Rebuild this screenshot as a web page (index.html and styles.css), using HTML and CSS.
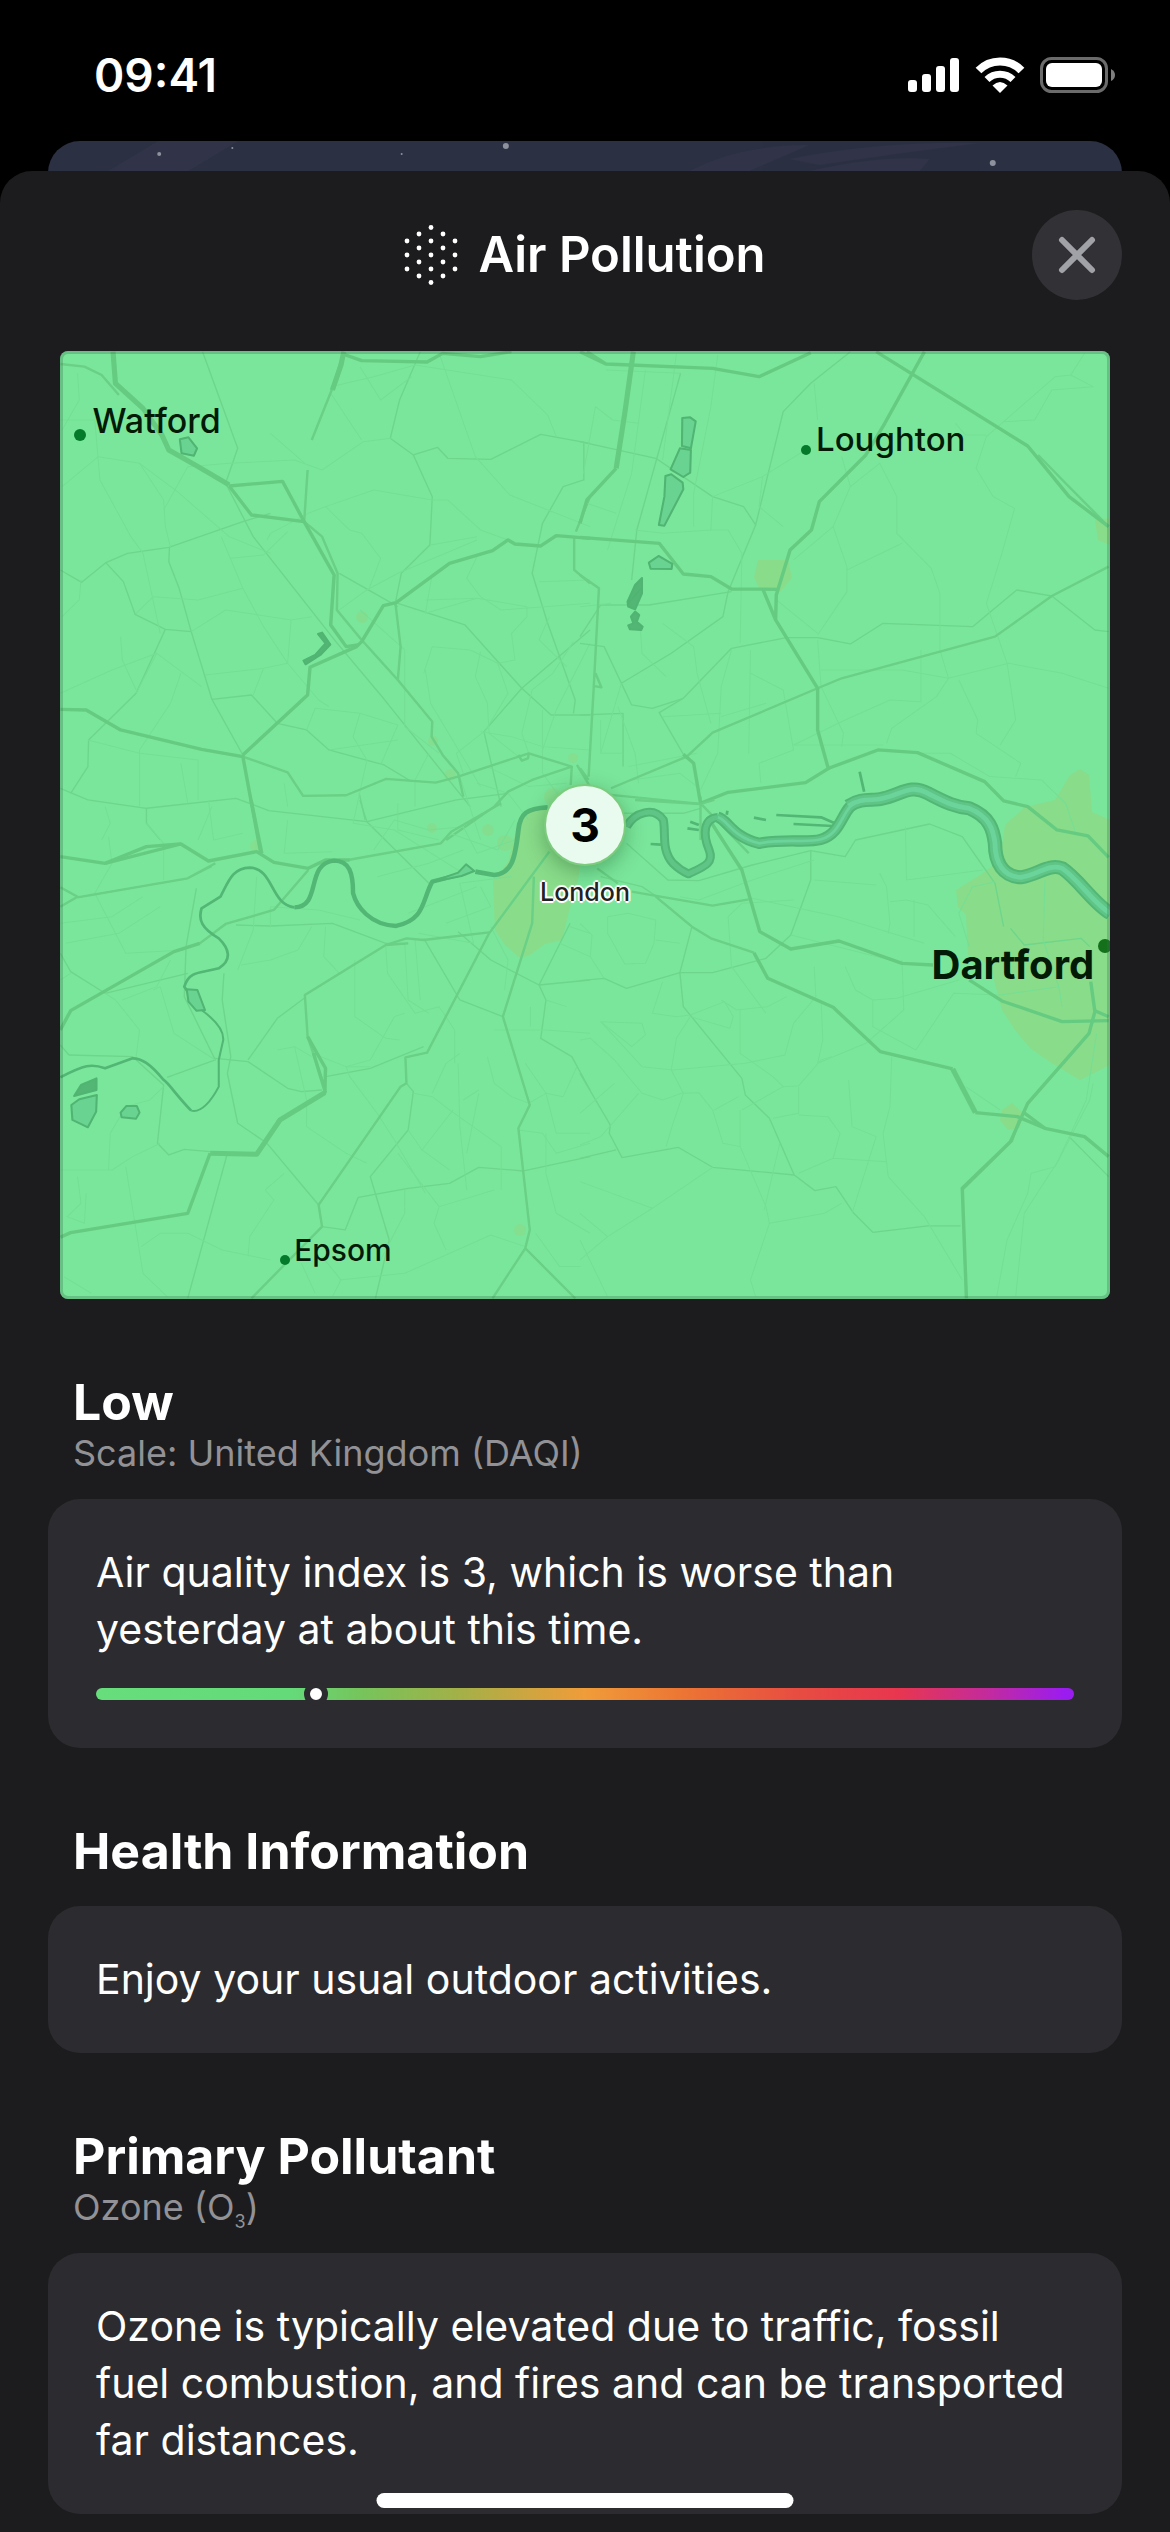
FILE: index.html
```html
<!DOCTYPE html>
<html lang="en">

<head>
    <meta charset="UTF-8">
    <meta name="viewport" content="width=device-width, initial-scale=1.0">
    <title>Air Pollution</title>
    <link rel="stylesheet" href="styles.css">
</head>

<body>
    <div class="status-bar">
        <span class="time">09:41</span>
        <div class="status-icons">
            <svg width="52" height="36" viewBox="0 0 52 36" fill="#fff">
                <rect x="0" y="23" width="9" height="12" rx="3" />
                <rect x="14" y="17" width="9" height="18" rx="3" />
                <rect x="28" y="9" width="9" height="26" rx="3" />
                <rect x="42" y="1" width="9" height="34" rx="3" />
            </svg>
            <svg width="50" height="36" viewBox="0 0 50 36" fill="none" stroke="#fff" stroke-width="8">
                <path d="M3.500 13.500 A30 30 0 0 1 46.500 13.500" />
                <path d="M12 22.500 A18.500 18.500 0 0 1 38 22.500" stroke-width="7" />
                <path d="M25 36 L17.500 28.500 Q25 21.500 32.500 28.500Z" fill="#fff" stroke="none" />
            </svg>
            <svg width="76" height="36" viewBox="0 0 76 36">
                <rect x="1.500" y="1.500" width="65" height="33" rx="10" fill="none" stroke="#6b6b6b" stroke-width="3" />
                <rect x="6" y="6" width="56" height="24" rx="6" fill="#fff" />
                <path d="M71 12 Q75 14 75 18 Q75 22 71 24Z" fill="#7f7f7f" />
            </svg>
        </div>
    </div>

    <div class="back-card">
        <svg width="100%" height="30" viewBox="0 0 1072 30" preserveAspectRatio="none">
            <g fill="#3f3f58" opacity="0.3">
                <path d="M60 30 L110 0 L190 0 L140 30Z" />
                <path d="M640 30 Q690 4 760 4 L700 30Z" />
                <path d="M740 18 Q830 0 930 2 Q850 12 770 24Z" />
                <path d="M760 30 Q830 14 880 18 L870 30Z" />
            </g>
            <g fill="#8d929c">
                <circle cx="111" cy="13" r="2" />
                <circle cx="184" cy="7" r="1" />
                <circle cx="353" cy="13" r="1" />
                <circle cx="457" cy="5" r="3" />
                <circle cx="943" cy="22" r="3" />
            </g>
        </svg>
    </div>

    <main class="sheet">
        <header class="sheet-header">
            <div class="title">
                <svg width="54" height="64" viewBox="0 0 54 64" fill="#fff">
                    <circle cx="27" cy="4.500" r="2.400" />
                    <circle cx="27" cy="18" r="2.400" />
                    <circle cx="27" cy="32" r="2.400" />
                    <circle cx="27" cy="46" r="2.400" />
                    <circle cx="27" cy="59.500" r="2.400" />
                    <circle cx="15" cy="11" r="2.400" />
                    <circle cx="15" cy="25" r="2.400" />
                    <circle cx="15" cy="39" r="2.400" />
                    <circle cx="15" cy="53" r="2.400" />
                    <circle cx="39" cy="11" r="2.400" />
                    <circle cx="39" cy="25" r="2.400" />
                    <circle cx="39" cy="39" r="2.400" />
                    <circle cx="39" cy="53" r="2.400" />
                    <circle cx="3" cy="18" r="2.400" />
                    <circle cx="3" cy="32" r="2.400" />
                    <circle cx="3" cy="46" r="2.400" />
                    <circle cx="51" cy="18" r="2.400" />
                    <circle cx="51" cy="32" r="2.400" />
                    <circle cx="51" cy="46" r="2.400" />
                </svg>
                <h1>Air Pollution</h1>
            </div>
            <button class="close" aria-label="Close">
                <svg width="40" height="40" viewBox="0 0 40 40" stroke="#a1a1a8" stroke-width="6" stroke-linecap="round">
                    <path d="M5 5 L35 35 M35 5 L5 35" />
                </svg>
            </button>
        </header>

        <div class="map">
            <svg class="map-art" viewBox="60 351 1050 948" fill="none" stroke-linejoin="round">
                <rect x="60" y="351" width="1050" height="948" fill="#7ae69b" />

                <!-- pollution patches -->
                <g class="patch">
                    <path d="M1110 965 L1110 820 L1092 812 L1089 775 L1080 769 L1070 775 L1055 800 L1025 807 L1005 825 L1000 860 L980 875 L956 890 L958 907 L966 915 L968 955 L990 965 L1002 1010 L1015 1030 L1030 1048 L1050 1062 L1080 1080 L1090 1075 L1110 1065Z" />
                    <path d="M493 880 L508 862 L518 822 L530 808 L560 808 L585 830 L578 880 L568 915 L562 940 L545 944 L530 955 L520 958 L505 945 L495 930Z" />
                    <path d="M758 560 L788 560 L792 578 L780 592 L760 590 L754 577Z" />
                    <path d="M1095 520 L1110 518 L1110 545 L1098 540Z" />
                    <path d="M1002 1110 L1012 1103 L1022 1112 L1020 1128 L1008 1130 L1000 1120Z" />
                </g>
                <g class="patch hot">
                    <circle cx="362" cy="617" r="6" />
                    <circle cx="433" cy="741" r="5" />
                    <circle cx="450" cy="775" r="6" />
                    <circle cx="573" cy="758" r="5" />
                    <circle cx="256" cy="846" r="6" />
                    <circle cx="432" cy="828" r="5" />
                    <circle cx="488" cy="830" r="6" />
                    <circle cx="505" cy="843" r="8" />
                    <circle cx="553" cy="797" r="9" />
                    <circle cx="520" cy="1230" r="6" />
                </g>

                <!-- north west -->
                <g transform="translate(50 340) scale(0.3444 0.3333)">
                    <g class="lane">
                        <path d="M443 35 L545 325 L510 430 L590 590 L830 905 L960 1065 L1220 1400" />
                        <path d="M30 690 L92 727 L162 668 L225 640 L345 622 L560 545 L640 520" />
                        <path d="M162 668 L213 725 L247 823 L335 868 L410 875 L470 1078 L585 1065 L660 1150 L745 1170 L810 1230 L970 1275 L1050 1325" />
                        <path d="M335 868 L250 1060 L112 1200 L110 1280 L60 1360" />
                        <path d="M347 622 L345 665 L375 745 L410 875" />
                        <path d="M1075 35 L1015 180 L988 295 L1055 345 L1110 470 L1103 615 L1020 700 L1003 788" />
                        <path d="M1055 345 L1125 322 L1155 355 L1280 358 L1425 283 L1568 310" />
                        <path d="M1550 310 L1550 420 L1490 440 L1430 550 L1400 700 L1445 850 L1525 1080 L1520 1120" />
                        <path d="M1003 788 L1205 855 L1370 1045 L1455 1125 L1568 1125" />
                        <path d="M1568 870 L1370 1045 L1260 1175 L1310 1400" />
                        <path d="M840 700 L1010 800" />
                        <path d="M30 1345 L110 1380 L280 1405 L540 1375 L635 1412 L920 1445 L1180 1380 L1330 1360" />
                        <path d="M280 1405 L280 1450 L320 1500 M898 1360 L915 1440" />
                        <path d="M470 1078 L560 1245" />
                    </g>
                    <g class="path">
                        <path d="M80 100 L85 180 L35 270 M30 240 L130 240 L145 420 L235 590 L270 640 L320 880" />
                        <path d="M35 440 L140 350 L260 370 L370 455 L520 590 L640 640" />
                        <path d="M260 370 L330 480 L335 560 L350 622" />
                        <path d="M330 510 L400 380 L520 370 L710 360 L790 390 L910 305 L990 295" />
                        <path d="M640 280 L740 370 M900 80 L960 180 L1050 110" />
                        <path d="M815 140 L940 110 L1060 75 M815 160 L905 300 M1130 40 L1235 350 L1335 465 L1568 560" />
                        <path d="M1060 75 L1340 120 L1445 225 L1470 290" />
                        <path d="M750 520 L800 500 L940 450 L1110 480 L1155 480 L1250 570 L1330 600" />
                        <path d="M800 500 L870 570 L905 580 L960 655 L925 750 M750 520 L640 580 L630 600" />
                        <path d="M497 590 L560 745 L620 860 L690 970 L780 1080 L810 1100" />
                        <path d="M525 655 L620 645 L690 575 M560 745 L430 780 L300 770 L250 820" />
                        <path d="M410 875 L510 810 L700 840 L760 830 M700 840 L690 970 L620 985 L450 1005" />
                        <path d="M620 985 L590 1065 M310 940 L250 1060 M205 890 L210 960 L250 1050 M30 1060 L180 990 L310 940 L440 1040" />
                        <path d="M90 720 L85 780 L35 830 M380 1000 L350 1090 L260 1230 L260 1400" />
                        <path d="M110 1200 L260 1240 L430 1260 L430 1380 M380 1270 L400 1390 M470 1400 L430 1500 M160 1400 L175 1450 L150 1500" />
                        <path d="M745 1170 L770 1105 L900 1120 L1010 1155 L960 1275 M900 1120 L880 1190 L920 1260 L880 1450" />
                        <path d="M840 810 L920 750 L1010 700 L1240 600 M1105 615 L1240 590 M900 810 L1030 930 L1030 1160 L1130 1240 M1090 990 L1105 1090 L1250 1340" />
                        <path d="M1110 700 L1090 820 L1240 775 L1385 800 L1385 830 L1340 880 L1350 960 L1300 970" />
                        <path d="M1240 650 L1210 715 L1250 770 L1310 810 L1568 790 M1090 780 L1240 775 M1420 725 L1568 720 M1450 830 L1420 900 L1500 980" />
                        <path d="M1110 920 L1220 930 L1300 970 L1330 1060 L1260 1180 M1110 920 L1085 1000 M1250 935 L1235 1010 L1270 1090 L1275 1180 L1360 1250" />
                        <path d="M1430 1230 L1470 1110 L1568 910 M1520 905 L1460 1000 L1400 1050 L1370 1180 L1390 1240 M1430 1110 L1430 1300 L1500 1400" />
                        <path d="M1260 1175 L1180 1240 L1200 1300 M1250 1175 L1340 1190 L1430 1220 L1568 1230 M1270 1280 L1390 1340 L1500 1330 M1240 1330 L1330 1360 L1390 1440" />
                        <path d="M1190 1310 L1250 1500 M1010 1390 L1010 1470 L1130 1500 M1100 1240 L1060 1320 L1060 1400 M680 1330 L690 1400 M810 1230 L1010 1200" />
                    </g>
                    <g class="street">
                        <path d="M853 35 L818 150 L760 300 M748 390 L738 545 M1568 470 L1527 575" />
                        <path d="M738 545 L790 590 L835 700 L833 810 L905 900 L1010 1020 L1110 1145 L1108 1190 L1140 1245 L1185 1300 L1200 1370" />
                        <path d="M560 1250 L690 1297 L735 1368 L860 1366 L975 1317 L1120 1328 L1185 1310 L1390 1240 L1515 1280 L1400 1320 L1330 1355 L1290 1400 L1150 1500" />
                        <path d="M1003 790 L1018 920 L1010 1020 M1360 1245 L1370 1262 L1388 1255 L1390 1240 M1515 1280 L1512 1335 M1530 1275 L1568 1340" />
                        <path d="M30 72 L100 80 L150 105 L200 165 M1522 590 L1522 690 L1568 730" />
                    </g>
                    <g class="road">
                        <path class="wide" d="M183 35 L190 130 L270 205 L325 285 L345 330 L430 380 L520 435" />
                        <path d="M520 438 L675 424 L738 545 M520 438 L585 525 L738 545" />
                        <path d="M738 545 L825 705 L815 855 L860 920 L895 915" />
                        <path class="wide" d="M853 35 L845 75 L820 150" />
                        <path d="M850 42 L905 62 L1095 66 L1140 40 L1250 50 L1340 35" />
                        <path d="M1568 595 L1470 587 L1425 618 L1350 612 L1330 600 L1285 632 L1160 670 L1005 788 L968 797 L905 905 L890 920 L755 982 L748 1065 L560 1245" />
                        <path d="M30 1108 L105 1110 L205 1170 L440 1228 L560 1250 L612 1540" />
                    </g>
                    <g class="water">
                        <path d="M377 298 L402 292 L427 325 L418 347 L382 340Z" />
                        <path class="deep" d="M778 882 L790 878 L814 914 L785 945 L742 973 L736 962 L770 945 L800 910Z" />
                    </g>
                </g>

                <!-- north east -->
                <g transform="translate(580 340) scale(0.3444 0.3333)">
                    <g class="lane">
                        <path d="M785 35 L670 130 L590 215 L510 555 L430 755 L415 830 L265 940 L120 1030" />
                        <path d="M0 305 L220 355 L385 470 L475 500 L510 555 M292 100 L165 570 L150 720" />
                        <path d="M440 755 L200 795 L60 795 L0 890" />
                        <path d="M0 910 L70 920 L150 1095 L210 1105 L300 1075 L440 925 L600 893 L690 893 L785 912 L880 850 L1140 860 L1268 750 L1370 768 L1495 870 L1535 875" />
                        <path d="M300 1075 L230 1118 L300 1243 M0 1125 L125 1120 L125 1280" />
                        <path d="M60 1420 L300 1420 L350 1405" />
                    </g>
                    <g class="path">
                        <path d="M1465 40 L1425 105 L1380 110 L1230 245 L1180 290 L1150 385 L1200 470 L1262 505 L1225 640 L1180 790 L1240 970 L1265 1140 L1220 1215" />
                        <path d="M1090 250 L1120 285 L1180 285 M1425 105 L1490 140 L1370 150 L1320 240 L1230 245" />
                        <path d="M760 350 L785 440 L735 560 L775 680 L775 755 L690 885 M785 440 L870 370 L920 470 L920 580 L1020 685 L1045 760 L1045 930 L1070 1015 L1035 1070 L905 1165 L890 1210" />
                        <path d="M775 690 L935 610 M735 560 L620 660 M680 130 L690 240 M45 200 L95 240 L170 250 M45 200 L10 400 M190 90 L150 400 L80 630" />
                        <path d="M75 90 L292 100 M280 40 L240 360 M400 45 L380 200 L330 460 L330 560 M385 470 L380 570 L240 580 L160 570" />
                        <path d="M385 470 L530 410 L670 320 M380 570 L430 570 L470 640 L465 910 M530 410 L520 500 L590 560" />
                        <path d="M20 490 L105 520 M0 800 L90 790 M175 860 L180 940 L250 1010 M240 850 L330 920 L340 1000 L380 1150" />
                        <path d="M120 1030 L60 1240 M110 1100 L160 1240 L170 1330 M60 1140 L60 1240 L125 1240" />
                        <path d="M440 930 L410 1040 L400 1240 M495 930 L490 1240 M495 1000 L590 1050 L620 1230 L520 1270 L525 1330" />
                        <path d="M690 900 L700 1040 L765 1180 L760 1220 M570 780 L690 880 M700 990 L935 990 L1070 1015 L1245 970 L1400 1000 L1535 1045" />
                        <path d="M990 930 L990 1085 L900 1080 L770 1140 L620 1215 M1100 1020 L1155 1140 L1150 1180 L1280 1270 L1265 1310" />
                        <path d="M620 1215 L880 1215 M980 1240 L1075 1240 L1190 1310 L1340 1320 L1410 1390 L1440 1480 M400 1240 L350 1350" />
                        <path d="M240 1130 L410 1120 M410 1130 L540 1090 M140 1280 L340 1240 M150 1320 L290 1300 L340 1340" />
                    </g>
                    <g class="street">
                        <path d="M0 705 L55 745 L40 1040 L25 1310 M45 1000 L62 1042 L38 1038 M0 1285 L25 1320" />
                        <path d="M1535 680 L1370 768 L1205 890 L760 1015 L690 1045 L385 1178 L310 1250 L90 1345" />
                        <path d="M90 1365 L350 1392 M350 1370 L350 1500 M1330 345 L1410 430 L1535 560" />
                    </g>
                    <g class="road">
                        <path class="wide" d="M155 35 L130 220 L105 385" />
                        <path d="M105 385 L20 480 L0 550 M0 592 L230 610 L300 702 L380 710 L440 747 L575 748" />
                        <path d="M0 35 L75 72 L385 85 L520 110 L670 38 M20 35 L75 72" />
                        <path d="M860 35 L1300 318 L1420 470 L1535 560 M1000 35 L885 250 L830 345 L695 485 L672 570 L610 630 L570 765 L568 840 L690 1045 L690 1170 L722 1290" />
                        <path d="M530 745 L568 840 M300 1243 L330 1270 L350 1390" />
                        <path d="M350 1390 L430 1357 L655 1328 L722 1285 L865 1230 L980 1238 L1175 1325 L1230 1383 L1300 1400 L1385 1470 L1475 1488 L1535 1552" />
                    </g>
                    <g class="water">
                        <path d="M297 234 L320 232 L336 244 L322 325 L296 318Z" />
                        <path d="M290 325 L322 330 L320 398 L300 411 L263 388Z" />
                        <path d="M248 408 L265 403 L298 428 L300 448 L245 557 L229 555 L245 470Z" />
                        <path d="M200 668 L228 648 L268 672 L266 687 L205 686Z" />
                        <path class="deep" d="M180 714 L180 760 L160 808 L140 800 L138 785 L160 735Z" />
                        <path class="deep" d="M160 815 L172 825 L165 845 L182 860 L178 870 L145 868 L140 856 L155 850 L148 830Z" />
                        <path d="M138 792 L178 745" stroke-width="4" />
                    </g>
                </g>

                <!-- south west -->
                <g transform="translate(50 800) scale(0.3444 0.3333)">
                    <g class="lane">
                        <path d="M80 292 L400 235 L470 200 M425 265 L395 440 L390 590 L480 780 L340 832" />
                        <path d="M30 460 L60 515 L160 580 L400 520 M55 765 L240 770 L330 855 L312 1030 L345 1065 L390 1048 L465 1055" />
                        <path d="M30 735 L55 765 M480 775 L575 785 L690 865 L730 875 L790 870 M575 780 L660 655 L738 595" />
                        <path d="M505 520 L500 600 L525 770 L515 820 L545 970 L630 1030 L780 1215" />
                        <path d="M540 375 L640 378 L820 370 L975 430 L1040 430" />
                        <path d="M1185 395 L1280 480 L1420 555 L1568 540 M1510 370 L1420 555 L1440 600 L1425 715 L1515 770 L1568 870" />
                        <path d="M1085 415 L1190 600 L1315 650 M515 1060 L400 1495 M790 1280 L857 1290 L895 1192 L1040 1165 L1160 1150 L1245 1102 L1375 1113 L1568 1070" />
                        <path d="M1035 850 L1055 875 L1040 990 L930 1130 L985 1320 L945 1495 M800 830 L930 805 L1085 740" />
                        <path d="M920 65 L1100 250 M900 0 L920 65" />
                    </g>
                    <g class="path">
                        <path d="M30 370 L180 350 L270 290 M45 430 L200 400 L320 320 M170 110 L180 190 L130 280 L220 460 L390 450" />
                        <path d="M280 70 L330 130 L330 240 M460 0 L475 120 L560 100 M690 60 L680 160 L820 155 M60 520 L30 540" />
                        <path d="M160 580 L190 600 L260 690 L250 770 M300 570 L320 560 L360 700 L480 780 M210 600 L310 560 L350 480" />
                        <path d="M545 510 L590 390 L600 230 M555 495 L640 480 L720 450 L760 380 M640 380 L640 320 L780 330 L900 360" />
                        <path d="M800 380 L795 470 L840 520 M885 480 L885 650 L975 715 L1015 720 M975 440 L980 520 L1060 640 L1130 620 L1175 690 L1175 790" />
                        <path d="M1030 430 L1040 600 L1100 640 M1060 420 L1075 600 M1070 400 L1230 430 L1190 250 L1340 230" />
                        <path d="M860 800 L930 780 L1000 650 L1030 640 M860 800 L870 830 L950 940 L1000 1020 L1090 1180" />
                        <path d="M660 750 L710 740 L760 770 M710 740 L745 900 L745 980 L860 1060 L920 1090 M760 760 L860 800 L930 800" />
                        <path d="M1055 880 L1110 890 L1160 930 L1310 1040 L1310 1170 M1110 880 L1150 790 L1190 760 M1185 790 L1190 980 L1210 1170" />
                        <path d="M1040 990 L1080 1050 L1160 1110 M1080 1050 L1170 930 M1245 880 L1210 1060 M1290 690 L1340 690 L1440 690 L1568 700" />
                        <path d="M1270 770 L1290 850 L1340 890 L1390 910 L1440 880 L1490 890 L1530 800 M1360 990 L1430 1000 L1470 1060 L1568 1030" />
                        <path d="M1380 790 L1440 880 L1470 1000 L1568 1000 M1440 1000 L1440 1120 L1470 1240 L1568 1300" />
                        <path d="M30 1110 L180 1110 L240 1070 L320 1030 M220 1100 L270 1420 L340 1490 M170 1110 L175 1000 L220 920 L290 900 L330 860" />
                        <path d="M265 1340 L320 1300 L400 1300 L500 1350 L640 1380 M625 1170 L650 1200 L580 1310 L575 1370 M625 1170 L680 1120" />
                        <path d="M80 1130 L90 1210 L50 1250 L100 1270 L105 1180 M40 1430 L120 1480 M730 1390 L770 1480 M840 1440 L1030 1420 L1280 1305 L1380 1340" />
                        <path d="M820 1490 L845 1440 L790 1370 M1030 1170 L1030 1240 L960 1380 M1010 1060 L1130 1220 L1290 1170 M1130 1220 L1115 1270 L1150 1350" />
                        <path d="M1410 1300 L1480 1400 L1540 1400 M1200 900 L1245 870 M1040 340 L1240 260 M1150 370 L1280 320 L1250 260" />
                        <path d="M1395 620 L1395 680 M1320 570 L1330 480 L1280 380 M1440 600 L1500 620 M1480 430 L1568 470 M1510 380 L1568 400" />
                        <path d="M940 150 L1000 60 L1100 90 L1200 80 L1240 160 L1350 120 M880 70 L1000 90 L1200 220 M1160 100 L1300 150 L1350 60 M1200 150 L1100 190 L950 230" />
                    </g>
                    <g class="street">
                        <path d="M865 180 L1135 130 L1165 95 L1310 10 M30 320 L80 290 L30 262 M80 292 L400 235 L480 190" />
                        <path d="M1040 430 L975 435 L740 585 L748 710 L800 870 M975 435 L1035 415 L1085 420 L1275 397" />
                        <path d="M1450 155 L1275 400 L1095 758 L1032 772 L1035 850 L1018 860 L780 1215 L790 1280 L585 1495" />
                        <path d="M1405 230 L1400 370 L1315 650 L1393 915 L1360 985 L1393 1290 L1380 1345 L1285 1495 M1380 1345 L1525 1495" />
                        <path d="M750 210 L650 330 L510 372 L435 430" />
                    </g>
                    <g class="road">
                        <path d="M30 170 L160 190 L280 140 L380 132 L460 183 L600 155 L650 187 L750 205 L800 180 L870 180" />
                        <path d="M160 190 L380 132 M584 0 L615 160 M30 690 L60 632 L360 455 L435 430" />
                        <path d="M748 710 L800 805 L798 878 L660 965 M800 878 L765 760" />
                        <path class="wide" d="M798 878 L668 960 L600 1063 L465 1060" />
                        <path d="M465 1060 L400 1240 L60 1298 L30 1312" />
                    </g>
                    <g class="river">
                        <path stroke-width="14" d="M1445 22 C1385 25 1365 40 1360 90 C1350 180 1340 220 1290 225 L1235 215" />
                        <path stroke-width="13" d="M1185 225 L1110 245 C1080 300 1090 360 1005 378 C930 375 890 320 880 280 C880 220 870 182 825 182 C740 190 790 322 710 322" />
                        <path stroke-width="8" d="M710 322 C640 315 650 205 580 203 C530 205 520 240 495 290 L440 325 C430 360 440 385 490 415 C520 445 530 480 490 505 C440 520 405 510 390 560 L400 575" />
                        <path stroke-width="6" d="M440 630 C480 660 505 690 503 720 L490 780 L490 860 C470 900 440 940 410 932" />
                        <path stroke-width="8" d="M410 932 C370 890 345 850 330 840 C290 790 265 775 240 775 L160 805 C120 790 100 795 30 832" />
                    </g>
                    <g class="water">
                        <path d="M1110 245 L1185 218 L1208 193 L1232 213 L1195 228Z" />
                        <path d="M397 568 L428 570 L450 630 L425 632 L402 605Z" />
                        <path class="deep" d="M135 835 L135 870 L70 888 L90 855Z" />
                        <path d="M62 915 L85 898 L136 885 L134 935 L110 982 L65 960Z" />
                        <path d="M222 918 L252 918 L260 938 L250 956 L208 952 L205 938Z" />
                    </g>
                </g>

                <!-- south east -->
                <g transform="translate(580 800) scale(0.3444 0.3333)">
                    <g class="lane">
                        <path d="M135 130 L255 240 L345 242 L500 195 L670 152 L770 170 L800 120 L1015 72 L1110 110 L1205 250 L1230 380" />
                        <path d="M670 152 L670 240 L612 405 L540 475 L385 518 L290 518 L135 565 L70 535 L0 542" />
                        <path d="M325 380 L290 518 L300 620 L470 835 L480 885 L550 955 L622 1125 L682 1172 L743 1160 L795 1240 L850 1297 L1010 1278 L1105 1278" />
                        <path d="M0 820 L88 975 L85 1000 L122 1073 L285 1042 L385 1102 L622 1125 M0 1075 L105 1050" />
                        <path d="M1250 385 L1290 435 L1455 415 L1480 440 M1420 1010 L1535 1130" />
                        <path d="M60 230 L180 260 L230 295" />
                    </g>
                    <g class="path">
                        <path d="M870 220 L890 260 L900 370 L895 400 M680 240 L860 255 M945 80 L948 240 L1170 210 M948 300 L1010 315 L1090 410" />
                        <path d="M970 300 L970 410 M900 305 L948 300 M500 295 L750 350 L1000 430 M612 405 L900 480 M430 350 L440 500 L540 640" />
                        <path d="M80 350 L140 340 L220 360 L215 430 L190 490 L130 492 L80 400 L80 350 M0 370 L35 405 L30 470 L70 535" />
                        <path d="M220 420 L290 430 M240 545 L210 640 L280 650 L320 645 L420 605 L445 650 L435 685 L320 650 M410 600 L455 630 L545 620 L600 590" />
                        <path d="M680 500 L685 590 L620 670 L595 765 L480 790 L270 810 L180 800 L60 665 M465 630 L465 760 L560 830 L590 860 L635 857 L700 780 L730 770" />
                        <path d="M60 665 L180 670 L190 705 L150 740 L60 665 M0 720 L30 715 L100 780 L180 880 L240 900 L295 880 L345 878 L385 930 L415 1030 L465 1040" />
                        <path d="M320 650 L280 715 L265 810 L300 880 L270 970 L250 1040 M470 930 L590 860 M465 930 L465 1040 L540 1220 L550 1270 L495 1440 L510 1490" />
                        <path d="M635 860 L635 940 L560 955 M635 945 L720 950 L755 1000 L735 1075 L635 1120 M735 1075 L890 1085 M780 840 L790 980 L860 1010 L840 1075 L790 1240" />
                        <path d="M700 600 L705 720 L690 790 L830 730 L880 685 L940 630 L935 480 M770 500 L800 570 L850 600 L920 595 L1100 540" />
                        <path d="M850 600 L850 680 L975 750 L1085 580 L1220 585 L1390 560 M905 770 L900 920 L880 1000 L895 1130 L1000 1250 L1110 1440" />
                        <path d="M580 1030 L535 1230 M550 1270 L710 1240 L760 1210 M385 1102 L210 1225 L80 1310 L0 1380 M0 1145 L210 1225 M0 1240 L80 1310 M0 1320 L80 1490" />
                        <path d="M1140 260 L1100 340 L1130 440 M1140 260 L1205 245 M1350 240 L1345 420 L1390 560 L1400 620 M1120 860 L1220 930 M1490 850 L1480 900 L1390 1080 L1290 1240 L1265 1490" />
                        <path d="M1500 700 L1470 900 L1380 1100 L1310 1120 L1300 1180 L1240 1320 L1210 1490 M0 1035 L60 1010 L90 975 L170 880 M0 940 L100 850" />
                        <path d="M680 180 L500 240 L345 300 L290 290 M430 350 L470 310 L620 300 M390 930 L460 890" />
                    </g>
                    <g class="street">
                        <path d="M150 275 L385 317 L490 298 M50 205 L110 250 M220 290 L325 380 L380 415 L505 458" />
                        <path d="M160 0 L350 12 L390 0" />
                        <path d="M1110 1170 L1255 1022 L1275 960 M350 10 L490 160" />
                    </g>
                    <g class="road">
                        <path d="M370 50 L470 210 L522 395 L612 447 L752 423 L935 490 L1025 495 M1130 540 L1225 603 L1400 665 L1535 662 M1495 632 L1535 650" />
                        <path d="M505 458 L545 535 L735 622 L872 755 L1082 807" />
                        <path class="wide" d="M1082 807 L1148 938" />
                        <path d="M1148 938 L1270 950 L1350 985 L1465 1010 L1535 1070" />
                        <path d="M1483 545 L1495 635 L1478 700 L1300 910 L1250 1025 L1110 1165 L1122 1495 M1285 935 L1350 985" />
                    </g>
                    <g class="river">
                        <path stroke-width="26" d="M135 80 C160 35 215 20 242 60 C250 100 235 150 270 190 C290 210 300 215 315 222 C360 200 390 190 375 150 C355 100 360 55 400 52" />
                        <path stroke-width="34" d="M400 52 C430 60 440 110 520 130 C600 115 660 130 700 118 C760 100 760 30 800 5" />
                        <path stroke-width="42" d="M780 18 C820 -10 850 5 880 -5 C930 -15 960 -50 1010 -20 C1050 0 1080 20 1130 25 C1190 50 1200 90 1205 130 C1205 190 1230 230 1280 232 C1330 225 1360 190 1400 205 C1450 240 1490 310 1540 340" />
                        <path stroke-width="8" d="M505 53 L540 60 M570 45 L700 52 L740 70 M620 72 L735 78 M320 65 L345 75 M312 85 L345 90 M812 -85 L825 -25 M205 132 L235 134 M428 32 L426 44" />
                    </g>
                    <g class="river inner">
                        <path stroke-width="14" d="M135 80 C160 35 215 20 242 60 C250 100 235 150 270 190 C290 210 300 215 315 222 C360 200 390 190 375 150 C355 100 360 55 400 52" />
                        <path stroke-width="22" d="M400 52 C430 60 440 110 520 130 C600 115 660 130 700 118 C760 100 760 30 800 5" />
                        <path stroke-width="30" d="M780 18 C820 -10 850 5 880 -5 C930 -15 960 -50 1010 -20 C1050 0 1080 20 1130 25 C1190 50 1200 90 1205 130 C1205 190 1230 230 1280 232 C1330 225 1360 190 1400 205 C1450 240 1490 310 1540 340" />
                    </g>
                    <g class="river shine">
                        <path stroke-width="8" d="M400 52 C430 60 440 110 520 130 C600 115 660 130 700 118 C760 100 760 30 800 5" />
                        <path stroke-width="14" d="M780 18 C820 -10 850 5 880 -5 C930 -15 960 -50 1010 -20 C1050 0 1080 20 1130 25 C1190 50 1200 90 1205 130 C1205 190 1230 230 1280 232 C1330 225 1360 190 1400 205 C1450 240 1490 310 1540 340" />
                    </g>
                </g>

                <!-- town dots -->
                <g fill="#047a2a">
                    <circle cx="80" cy="435" r="6" />
                    <circle cx="806" cy="450" r="5" />
                    <circle cx="285" cy="1260" r="5" />
                    <circle cx="1105" cy="946" r="7" fill="#14701a" />
                </g>
            </svg>

            <span class="label watford">Watford</span>
            <span class="label loughton">Loughton</span>
            <span class="label epsom">Epsom</span>
            <span class="label dartford">Dartford</span>
            <span class="label london">London</span>
            <span class="pin">3</span>
        </div>

        <section class="section">
            <div class="section-head">
                <h2>Low</h2>
                <p>Scale: United Kingdom (DAQI)</p>
            </div>
            <div class="card">
                <p>Air quality index is 3, which is worse than yesterday at about this time.</p>
                <div class="scale" role="img" aria-label="Air quality index 3">
                    <span class="marker" style="left: 22.5%"></span>
                </div>
            </div>
        </section>

        <section class="section">
            <div class="section-head">
                <h2>Health Information</h2>
            </div>
            <div class="card">
                <p>Enjoy your usual outdoor activities.</p>
            </div>
        </section>

        <section class="section">
            <div class="section-head">
                <h2>Primary Pollutant</h2>
                <p>Ozone (O<sub>3</sub>)</p>
            </div>
            <div class="card">
                <p>Ozone is typically elevated due to traffic, fossil fuel combustion, and fires and can be transported far distances.</p>
            </div>
        </section>
    </main>

    <div class="home-indicator"></div>
</body>

</html>
```
FILE: styles.css
```css
* {
    box-sizing: border-box;
}

body {
    display: flex;
    flex-direction: column;
    min-height: 100vh;
    margin: 0;
    background-color: #000;
    color: #fff;
    font-family: Inter, "Liberation Sans", sans-serif;
}

h1,
h2,
p {
    margin: 0;
}

svg {
    display: block;
}

.status-bar {
    display: flex;
    justify-content: space-between;
    align-items: center;
    height: 141px;
    padding: 8px 54px 0 94px;
}

.time {
    font-size: 46px;
    font-weight: 600;
}

.status-icons {
    display: flex;
    gap: 15px;
}

.back-card {
    height: 60px;
    margin: 0 48px -30px;
    border-radius: 32px 32px 0 0;
    background-color: #2b3043;
    overflow: hidden;
}

.sheet {
    position: relative;
    flex: 1;
    padding-bottom: 16px;
    border-radius: 32px 32px 0 0;
    background-color: #1c1c1e;
}

.sheet-header {
    display: grid;
    grid-template-columns: 1fr auto 1fr;
    align-items: center;
    padding: 39px 48px 51px;
}

.title {
    grid-column: 2;
    display: flex;
    align-items: center;
    gap: 20px;
}

h1 {
    font-size: 49px;
    font-weight: 600;
    line-height: 60px;
}

.close {
    display: flex;
    align-items: center;
    justify-content: center;
    justify-self: end;
    width: 90px;
    height: 90px;
    padding: 0;
    border: none;
    border-radius: 50%;
    background-color: #323236;
    cursor: pointer;
}

.map {
    position: relative;
    margin: 0 60px;
    border-radius: 8px;
    overflow: hidden;
}

/* soft dark edge over the map */
.map::after {
    content: "";
    position: absolute;
    inset: 0;
    border-radius: 8px;
    box-shadow: inset 0 0 0 3px rgba(60, 110, 80, 0.3);
}

.map-art {
    width: 100%;
    height: auto;
}

.patch {
    fill: #89dc8a;
}

.hot {
    opacity: 0.7;
}

.road {
    stroke: #65cb80;
    stroke-width: 10;
}

.wide {
    stroke-width: 15;
}

.street {
    stroke: #69d085;
    stroke-width: 7;
}

.lane {
    stroke: #6dd68b;
    stroke-width: 4;
}

.path {
    stroke: #74df94;
    stroke-width: 3;
}

.water {
    fill: #69d391;
    stroke: #50b472;
    stroke-width: 6;
}

.deep {
    fill: #53b674;
}

.river {
    stroke: #52b775;
}

.inner {
    stroke: #5fc587;
}

.shine {
    stroke: #6bd49a;
}

.label {
    position: absolute;
    transform: translateY(-50%);
    color: #031a06;
    font-weight: 500;
    font-variant-ligatures: none;
    line-height: 40px;
}

.watford {
    top: 7.4%;
    left: 3.1%;
    font-size: 34px;
}

.loughton {
    top: 9.3%;
    left: 72%;
    font-size: 33px;
}

.epsom {
    top: 94.8%;
    left: 22.3%;
    font-size: 30px;
}

.dartford {
    top: 64.8%;
    left: 83%;
    font-size: 40px;
    font-weight: 700;
}

.london {
    top: 57.1%;
    left: 50%;
    transform: translate(-50%, -50%);
    color: #222;
    font-size: 25px;
    text-shadow: 2px 0 #fff, -2px 0 #fff, 0 2px #fff, 0 -2px #fff, 1px 1px 2px #fff, -1px -1px 2px #fff;
}

.pin {
    position: absolute;
    top: 50%;
    left: 50%;
    transform: translate(-50%, -50%);
    width: 82px;
    height: 82px;
    border: 2px solid #7ccc7e;
    border-radius: 50%;
    background-color: #e9faee;
    box-shadow: 0 6px 20px rgba(30, 90, 40, 0.4);
    color: #000;
    font-size: 46px;
    font-weight: 700;
    line-height: 78px;
    text-align: center;
}

.section {
    margin: 73px 48px 0;
}

.section-head {
    padding: 0 25px 25px;
}

h2 {
    font-size: 50px;
    font-weight: 700;
    line-height: 60px;
}

.section-head p {
    color: #929296;
    font-size: 36px;
    line-height: 42px;
}

sub {
    font-size: 18px;
    line-height: 0;
}

.card {
    padding: 45px 48px;
    border-radius: 32px;
    background-color: #2c2b2f;
}

.card p {
    font-size: 41px;
    line-height: 57px;
}

.scale {
    position: relative;
    height: 12px;
    margin: 30px 0 3px;
    border-radius: 6px;
    background: linear-gradient(to right, #67dd7c 0%, #65da79 20%, #76c45c 27%, #a3b048 37%, #f09c3a 50%, #ec7534 60%, #e74c42 72%, #e8364f 82%, #c42b9b 91%, #9b1cef 99%);
}

.marker {
    position: absolute;
    top: -6px;
    width: 24px;
    height: 24px;
    margin-left: -12px;
    border: 6px solid #2c2b2f;
    border-radius: 50%;
    background-color: #fff;
}

.home-indicator {
    position: fixed;
    bottom: 24px;
    left: 50%;
    transform: translateX(-50%);
    width: 417px;
    height: 15px;
    border-radius: 8px;
    background-color: #fff;
}
```
